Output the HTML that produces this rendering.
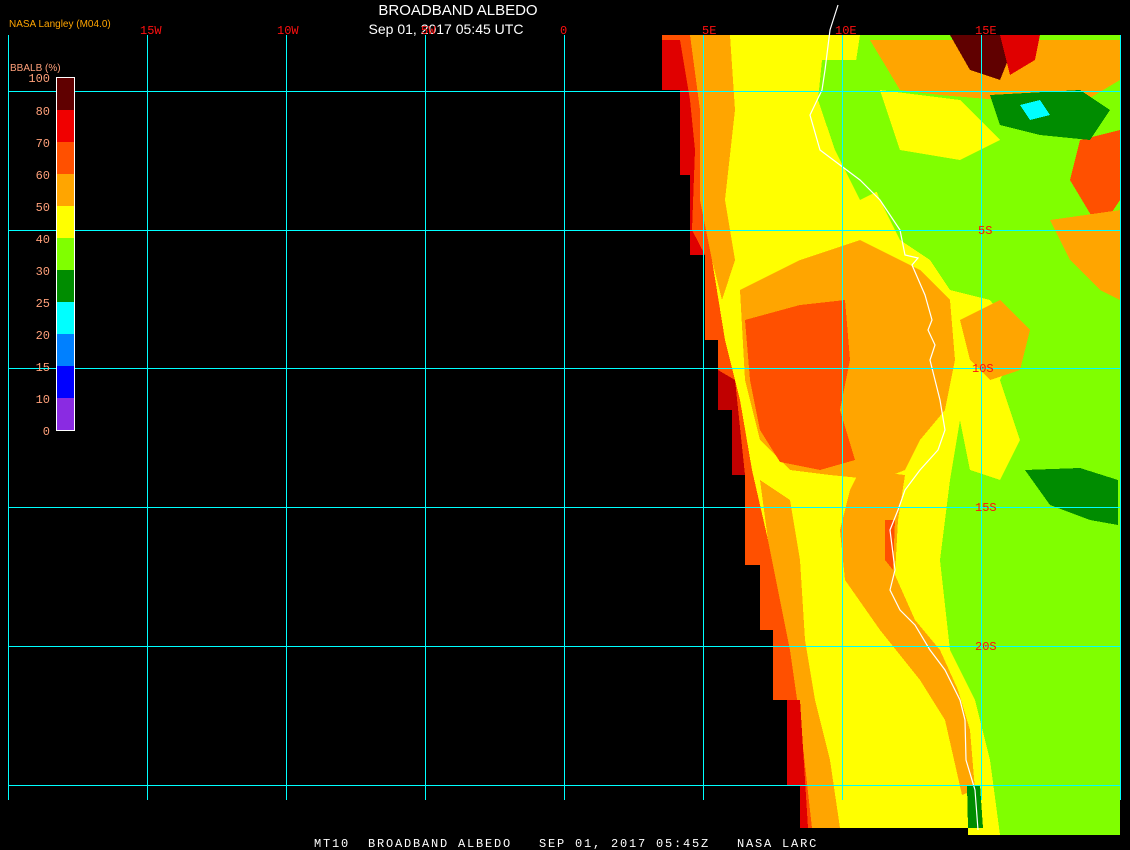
<!DOCTYPE html>
<html><head><meta charset="utf-8"><style>
html,body{margin:0;padding:0;background:#000;width:1130px;height:850px;overflow:hidden}
svg{position:absolute;left:0;top:0}
text{font-family:"Liberation Sans",sans-serif}
.m{font-family:"Liberation Mono",monospace}
</style></head><body>
<svg width="1130" height="850" viewBox="0 0 1130 850" shape-rendering="crispEdges">
<rect width="1130" height="850" fill="#000"/>
<!-- data region base: yellow -->
<polygon fill="#ffff00" points="662,35 1120,35 1120,835 968,835 968,828 800,828 800,785 787,785 787,700 773,700 773,630 760,630 760,565 745,565 745,475 732,475 732,410 718,410 718,340 705,340 705,255 690,255 690,175 680,175 680,90 662,90"/>
<!-- left strip -->
<polygon fill="#ff5000" points="662,35 690,35 700,110 700,200 712,260 725,340 740,400 752,470 768,540 780,600 790,650 800,720 812,828 800,828 800,785 787,785 787,700 773,700 773,630 760,630 760,565 745,565 745,475 732,475 732,410 718,410 718,340 705,340 705,255 690,255 690,175 680,175 680,90 662,90"/>
<polygon fill="#ffa500" points="690,35 730,35 735,110 725,200 735,260 722,300 712,260 700,200 700,110"/>
<polygon fill="#ffa500" points="760,480 790,500 800,560 805,640 815,700 830,760 840,828 812,828 800,720 790,650 780,600 768,540"/>
<polygon fill="#e00000" points="662,40 680,40 690,100 695,150 692,230 705,255 690,255 690,175 680,175 680,90 662,90"/>
<polygon fill="#c00000" points="718,370 735,380 745,475 732,475 732,410 718,410"/>
<polygon fill="#e00000" points="787,700 800,700 808,828 800,828 800,785 787,785"/>
<!-- orange mid region -->
<polygon fill="#ffa500" points="740,290 800,260 860,240 920,270 950,300 955,360 945,410 920,440 905,470 880,480 830,475 790,470 760,440 745,380"/>
<polygon fill="#ff5000" points="745,320 800,305 845,300 850,360 840,410 855,460 820,470 780,462 760,430 750,380"/>
<!-- coastal orange band -->
<polygon fill="#ffa500" points="860,470 905,475 898,520 895,575 915,620 940,650 958,690 970,730 975,790 962,795 945,720 920,680 880,630 845,580 840,530 850,490"/>
<polygon fill="#ff5000" points="885,520 895,520 893,570 885,560"/>
<!-- green east -->
<polygon fill="#80ff00" points="860,35 1120,35 1120,835 1000,835 990,760 975,700 950,650 940,560 950,480 960,420 1000,380 1020,340 990,300 950,290 930,260 900,240 880,200 860,150 850,100"/>
<polygon fill="#80ff00" points="822,60 860,60 870,140 880,190 860,200 835,150 818,100"/>
<polygon fill="#ffff00" points="960,420 1000,380 1020,440 1000,480 970,470"/>
<polygon fill="#ffa500" points="960,320 1000,300 1030,330 1020,370 990,380 970,360"/>
<!-- top right mixed -->
<polygon fill="#ffa500" points="870,40 1120,40 1120,80 1070,110 1000,100 940,95 900,90"/>
<polygon fill="#ffff00" points="880,90 960,100 1000,140 960,160 900,150"/>
<polygon fill="#ff5000" points="1080,140 1120,130 1120,200 1100,230 1070,180"/>
<polygon fill="#ffa500" points="1050,220 1120,210 1120,300 1100,290 1070,260"/>
<polygon fill="#600000" points="950,35 1000,35 1010,55 1000,80 970,70"/>
<polygon fill="#e00000" points="1000,35 1040,35 1035,60 1010,75"/>
<polygon fill="#008c00" points="990,95 1080,90 1110,110 1090,140 1040,135 1000,125"/>
<polygon fill="#00ffff" points="1020,105 1040,100 1050,115 1030,120"/>
<polygon fill="#008c00" points="1025,470 1080,468 1118,480 1118,525 1090,520 1050,505"/>
<polygon fill="#008c00" points="967,785 980,785 983,828 968,828"/>
<!-- coastline -->
<polyline fill="none" stroke="#fff" stroke-width="1.2" shape-rendering="auto" points="838,5 830,30 825,70 822,90 810,115 820,150 840,165 860,180 880,200 900,230 905,255 918,258 912,265 925,295 932,320 928,330 935,345 930,360 940,400 945,430 938,450 920,470 905,490 898,510 890,530 895,570 890,590 900,610 915,625 930,650 945,670 960,700 965,720 966,760 975,790 978,830"/>
<!-- grid -->
<g stroke="#00ffff" stroke-width="1">
<line x1="8.5" y1="35" x2="8.5" y2="800"/>
<line x1="147.5" y1="35" x2="147.5" y2="800"/>
<line x1="286.5" y1="35" x2="286.5" y2="800"/>
<line x1="425.5" y1="35" x2="425.5" y2="800"/>
<line x1="564.5" y1="35" x2="564.5" y2="800"/>
<line x1="703.5" y1="35" x2="703.5" y2="800"/>
<line x1="842.5" y1="35" x2="842.5" y2="800"/>
<line x1="981.5" y1="35" x2="981.5" y2="800"/>
<line x1="1120.5" y1="35" x2="1120.5" y2="800"/>
<line x1="8" y1="91.5" x2="1121" y2="91.5"/>
<line x1="8" y1="230.5" x2="1121" y2="230.5"/>
<line x1="8" y1="368.5" x2="1121" y2="368.5"/>
<line x1="8" y1="507.5" x2="1121" y2="507.5"/>
<line x1="8" y1="646.5" x2="1121" y2="646.5"/>
<line x1="8" y1="785.5" x2="1121" y2="785.5"/>
</g>
<!-- legend -->
<rect x="56" y="77" width="18" height="33" fill="#600000"/>
<rect x="56" y="110" width="18" height="32" fill="#f00000"/>
<rect x="56" y="142" width="18" height="32" fill="#ff5000"/>
<rect x="56" y="174" width="18" height="32" fill="#ffa500"/>
<rect x="56" y="206" width="18" height="32" fill="#ffff00"/>
<rect x="56" y="238" width="18" height="32" fill="#80ff00"/>
<rect x="56" y="270" width="18" height="32" fill="#008c00"/>
<rect x="56" y="302" width="18" height="32" fill="#00ffff"/>
<rect x="56" y="334" width="18" height="32" fill="#0080ff"/>
<rect x="56" y="366" width="18" height="32" fill="#0000ff"/>
<rect x="56" y="398" width="18" height="32" fill="#8a2be2"/>
<rect x="56.5" y="77.5" width="18" height="353" fill="none" stroke="#fff" stroke-width="1"/>
<g fill="#ffa07a" font-size="12" text-anchor="end">
<text x="50" y="82" class="m">100</text><text x="50" y="115" class="m">80</text><text x="50" y="147" class="m">70</text><text x="50" y="179" class="m">60</text><text x="50" y="211" class="m">50</text><text x="50" y="243" class="m">40</text><text x="50" y="275" class="m">30</text><text x="50" y="307" class="m">25</text><text x="50" y="339" class="m">20</text><text x="50" y="371" class="m">15</text><text x="50" y="403" class="m">10</text><text x="50" y="435" class="m">0</text>
</g>
<text x="10" y="71" fill="#ffa07a" font-size="10">BBALB (%)</text>
<text x="9" y="27" fill="#ffa500" font-size="10">NASA Langley (M04.0)</text>
<!-- titles -->
<text x="458" y="15" fill="#fff" font-size="15" text-anchor="middle">BROADBAND ALBEDO</text>
<text x="446" y="34" fill="#fff" font-size="14" text-anchor="middle">Sep 01, 2017 05:45 UTC</text>
<!-- top labels -->
<g fill="#ff1010" font-size="12">
<text x="140" y="34" class="m">15W</text><text x="277" y="34" class="m">10W</text><text x="421" y="34" class="m">5W</text><text x="560" y="34" class="m">0</text>
<text x="702" y="34" class="m">5E</text><text x="835" y="34" class="m">10E</text><text x="975" y="34" class="m">15E</text>
<text x="978" y="234" class="m">5S</text><text x="972" y="372" class="m">10S</text><text x="975" y="511" class="m">15S</text><text x="975" y="650" class="m">20S</text>
</g>
<text x="314" y="847" fill="#fff" font-size="12" class="m" letter-spacing="1.8" xml:space="preserve">MT10  BROADBAND ALBEDO   SEP 01, 2017 05:45Z   NASA LARC</text>
</svg>
</body></html>
